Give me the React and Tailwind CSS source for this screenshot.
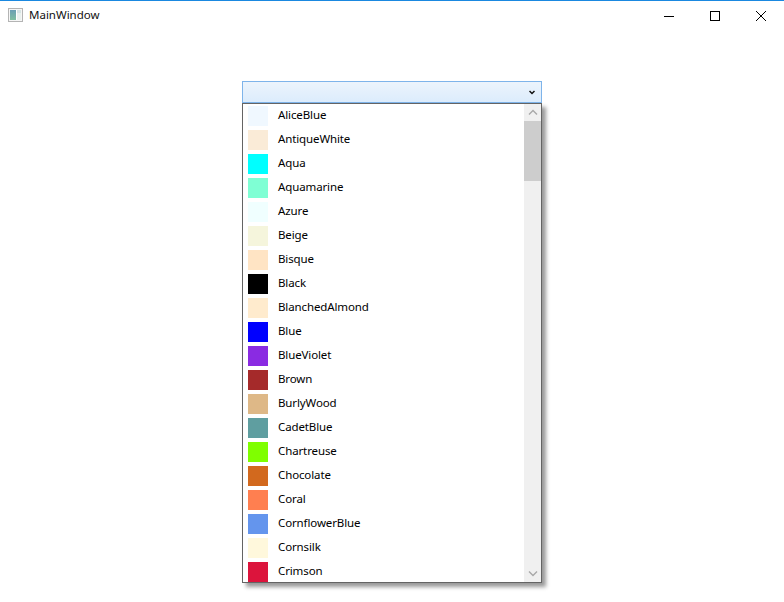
const colors = [
  ["AliceBlue", "#F0F8FF"], ["AntiqueWhite", "#FAEBD7"], ["Aqua", "#00FFFF"], ["Aquamarine", "#7FFFD4"],
  ["Azure", "#F0FFFF"], ["Beige", "#F5F5DC"], ["Bisque", "#FFE4C4"], ["Black", "#000000"],
  ["BlanchedAlmond", "#FFEBCD"], ["Blue", "#0000FF"], ["BlueViolet", "#8A2BE2"], ["Brown", "#A52A2A"],
  ["BurlyWood", "#DEB887"], ["CadetBlue", "#5F9EA0"], ["Chartreuse", "#7FFF00"], ["Chocolate", "#D2691E"],
  ["Coral", "#FF7F50"], ["CornflowerBlue", "#6495ED"], ["Cornsilk", "#FFF8DC"], ["Crimson", "#DC143C"],
];

function Row({ name, hex }) {
  return (
    <div className="flex h-6 shrink-0 items-center pl-[5px]">
      <div className="h-5 w-5 shrink-0" style={{ backgroundColor: hex }} />
      <span className="ml-2.5 pb-0.5 text-[11.5px] leading-none tracking-[-0.12px] text-black">{name}</span>
    </div>
  );
}

export default function App() {
  return (
    <div className="h-[602px] w-[784px] overflow-hidden border-t border-[#1a88e0] bg-white font-['Noto_Sans','Open_Sans',sans-serif]">
      <div className="flex h-[30px] items-center pl-2">
        <svg width="16" height="16" viewBox="0 0 16 16" className="shrink-0">
          <defs>
            <linearGradient id="ic" x1="0" y1="0" x2="0" y2="1">
              <stop offset="0" stopColor="#6a9fb4" />
              <stop offset="1" stopColor="#7fbfa0" />
            </linearGradient>
          </defs>
          <rect x="0.5" y="0.5" width="14" height="13" fill="#f6f6f6" stroke="#b4b4b4" />
          <rect x="2" y="2" width="6" height="10" fill="url(#ic)" />
          <rect x="8" y="2" width="1" height="10" fill="#ffffff" />
          <rect x="9" y="2" width="4" height="3" fill="#d6e4e4" />
          <rect x="9" y="5" width="4" height="7" fill="#e9f1ee" />
        </svg>
        <span className="ml-[5px] pb-0.5 text-[11.5px] leading-none text-[#111]">MainWindow</span>
        <div className="ml-auto flex">
          <div className="flex h-[30px] w-[46px] items-center justify-center">
            <svg width="12" height="12" viewBox="0 0 12 12"><path d="M1 6.5H11" stroke="#000" strokeWidth="1" /></svg>
          </div>
          <div className="flex h-[30px] w-[46px] items-center justify-center">
            <svg width="12" height="12" viewBox="0 0 12 12"><rect x="1.5" y="1.5" width="9" height="9" fill="none" stroke="#000" /></svg>
          </div>
          <div className="flex h-[30px] w-[46px] items-center justify-center">
            <svg width="12" height="12" viewBox="0 0 12 12"><path d="M1 1L11 11M11 1L1 11" stroke="#000" strokeWidth="1" /></svg>
          </div>
        </div>
      </div>

      <div className="relative ml-[242px] mt-[50px] w-[300px]">
        <div className="flex h-[22px] items-center justify-end border border-[#7eb4ea] bg-gradient-to-b from-[#ecf4fc] to-[#dcecfc] pr-1.5">
          <svg width="6" height="5" viewBox="0 0 6 5"><path d="M0.5 1L3 3.5L5.5 1" fill="none" stroke="#111" strokeWidth="1.5" /></svg>
        </div>
        <div className="absolute left-0 top-[22px] flex h-[480px] w-[300px] border border-[#646464] bg-white shadow-[4px_4px_4px_rgba(0,0,0,0.4)]">
          <div className="flex h-full min-w-0 flex-1 flex-col overflow-hidden">
            {colors.map(([name, hex]) => <Row key={name} name={name} hex={hex} />)}
          </div>
          <div className="flex h-full w-[17px] shrink-0 flex-col bg-[#f0f0f0]">
            <div className="flex h-[17px] shrink-0 items-center justify-center">
              <svg width="10" height="7" viewBox="0 0 10 7"><path d="M1 5.5L5 1.5L9 5.5" fill="none" stroke="#a8a8a8" strokeWidth="1.4" /></svg>
            </div>
            <div className="h-[60px] shrink-0 bg-[#cdcdcd]" />
            <div className="flex-1" />
            <div className="flex h-[17px] shrink-0 items-center justify-center">
              <svg width="10" height="7" viewBox="0 0 10 7"><path d="M1 1.5L5 5.5L9 1.5" fill="none" stroke="#a8a8a8" strokeWidth="1.4" /></svg>
            </div>
          </div>
        </div>
      </div>
    </div>
  );
}
